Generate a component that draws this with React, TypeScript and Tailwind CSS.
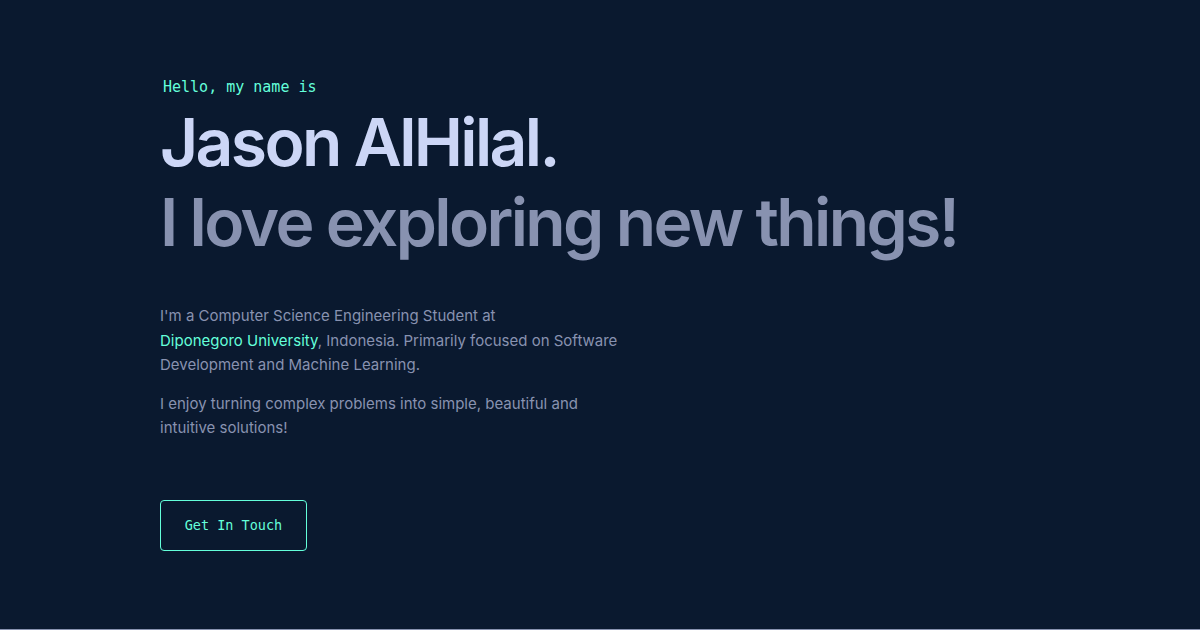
const App = () => {
  return (
    <main className="h-[630px] w-full bg-[#0a192f] border-b border-[#8892b0] overflow-hidden">
      <section className="pl-[160px] pt-[77px]">
        <h1 className="pl-[3px] text-[15px] leading-[20px] text-[#64ffda] font-['DejaVu_Sans_Mono',monospace]">
          Hello, my name is
        </h1>
        <div className="mt-[5px] font-['Inter',sans-serif] font-semibold tracking-[-0.04em] text-[66px] leading-[80px]">
          <h2 className="text-[#ccd6f6]">Jason AlHilal.</h2>
          <h3 className="text-[#8892b0]">I love exploring new things!</h3>
        </div>
        <div className="mt-[42px] max-w-[470px] text-[15px] leading-[24.5px] text-[#8892b0] font-['Inter',sans-serif]">
          <p>
            I'm a Computer Science Engineering Student at{' '}
            <a className="text-[#64ffda]">Diponegoro{'\u00A0'}University</a>, Indonesia. Primarily focused on Software
            Development and Machine Learning.
          </p>
          <p className="mt-[14px]">I enjoy turning complex problems into simple, beautiful and intuitive solutions!</p>
        </div>
        <button className="mt-[59px] w-[147px] h-[51px] rounded-[4px] border border-[#64ffda] text-[#64ffda] text-[13.5px] font-['DejaVu_Sans_Mono',monospace]">
          Get In Touch
        </button>
      </section>
    </main>
  );
};

export default App;
